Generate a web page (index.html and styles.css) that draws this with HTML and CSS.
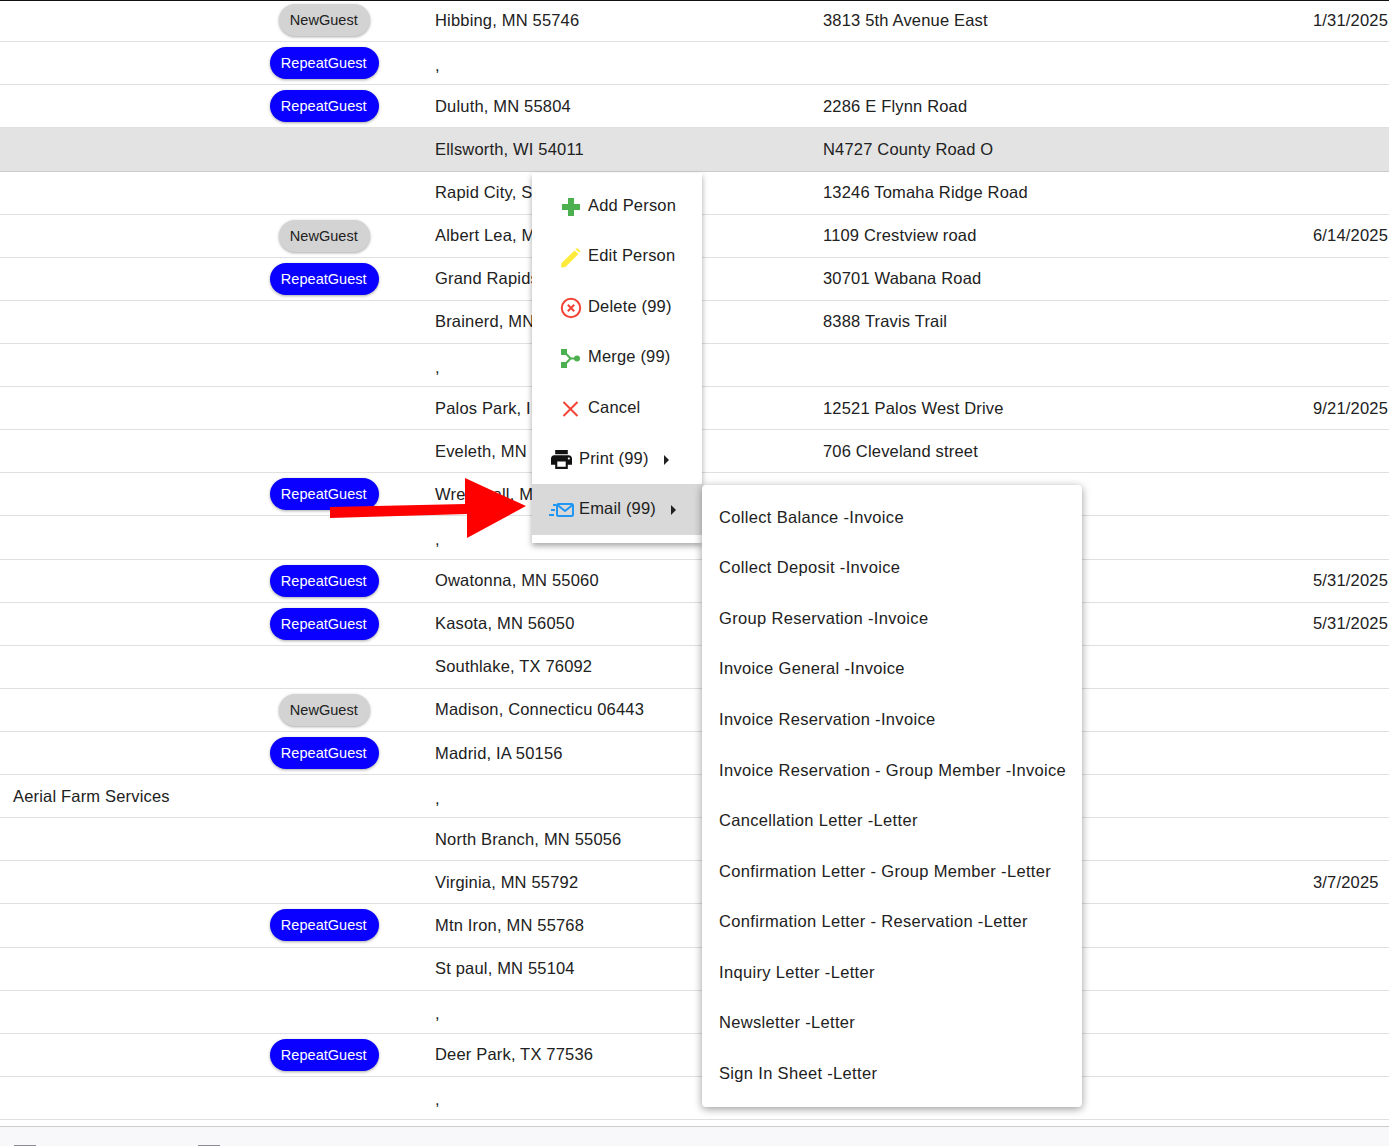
FILE: index.html
```html
<!DOCTYPE html>
<html lang="en">
<head>
<meta charset="utf-8">
<title>Guests</title>
<link rel="stylesheet" href="styles.css">
</head>
<body>
<div class="page">
  <div class="rows">
    <div class="row"><div class="c-co"></div><div class="c-tag"><span class="pill new">NewGuest</span></div><div class="c-city">Hibbing, MN 55746</div><div class="c-addr">3813 5th Avenue East</div><div class="c-date">1/31/2025</div></div>
    <div class="row"><div class="c-co"></div><div class="c-tag"><span class="pill rep">RepeatGuest</span></div><div class="c-city low">,</div><div class="c-addr"></div><div class="c-date"></div></div>
    <div class="row"><div class="c-co"></div><div class="c-tag"><span class="pill rep">RepeatGuest</span></div><div class="c-city">Duluth, MN 55804</div><div class="c-addr">2286 E Flynn Road</div><div class="c-date"></div></div>
    <div class="row sel"><div class="c-co"></div><div class="c-tag"></div><div class="c-city">Ellsworth, WI 54011</div><div class="c-addr">N4727 County Road O</div><div class="c-date"></div></div>
    <div class="row"><div class="c-co"></div><div class="c-tag"></div><div class="c-city">Rapid City, SD 57702</div><div class="c-addr">13246 Tomaha Ridge Road</div><div class="c-date"></div></div>
    <div class="row"><div class="c-co"></div><div class="c-tag"><span class="pill new">NewGuest</span></div><div class="c-city">Albert Lea, MN 56007</div><div class="c-addr">1109 Crestview road</div><div class="c-date">6/14/2025</div></div>
    <div class="row"><div class="c-co"></div><div class="c-tag"><span class="pill rep">RepeatGuest</span></div><div class="c-city">Grand Rapids, MN 55744</div><div class="c-addr">30701 Wabana Road</div><div class="c-date"></div></div>
    <div class="row"><div class="c-co"></div><div class="c-tag"></div><div class="c-city">Brainerd, MN 56401</div><div class="c-addr">8388 Travis Trail</div><div class="c-date"></div></div>
    <div class="row"><div class="c-co"></div><div class="c-tag"></div><div class="c-city low">,</div><div class="c-addr"></div><div class="c-date"></div></div>
    <div class="row"><div class="c-co"></div><div class="c-tag"></div><div class="c-city">Palos Park, IL 60464</div><div class="c-addr">12521 Palos West Drive</div><div class="c-date">9/21/2025</div></div>
    <div class="row"><div class="c-co"></div><div class="c-tag"></div><div class="c-city">Eveleth, MN 55734</div><div class="c-addr">706 Cleveland street</div><div class="c-date"></div></div>
    <div class="row"><div class="c-co"></div><div class="c-tag"><span class="pill rep">RepeatGuest</span></div><div class="c-city">Wrenshall, MN 55797</div><div class="c-addr"></div><div class="c-date"></div></div>
    <div class="row"><div class="c-co"></div><div class="c-tag"></div><div class="c-city low">,</div><div class="c-addr"></div><div class="c-date"></div></div>
    <div class="row"><div class="c-co"></div><div class="c-tag"><span class="pill rep">RepeatGuest</span></div><div class="c-city">Owatonna, MN 55060</div><div class="c-addr"></div><div class="c-date">5/31/2025</div></div>
    <div class="row"><div class="c-co"></div><div class="c-tag"><span class="pill rep">RepeatGuest</span></div><div class="c-city">Kasota, MN 56050</div><div class="c-addr"></div><div class="c-date">5/31/2025</div></div>
    <div class="row"><div class="c-co"></div><div class="c-tag"></div><div class="c-city">Southlake, TX 76092</div><div class="c-addr"></div><div class="c-date"></div></div>
    <div class="row"><div class="c-co"></div><div class="c-tag"><span class="pill new">NewGuest</span></div><div class="c-city">Madison, Connecticu 06443</div><div class="c-addr"></div><div class="c-date"></div></div>
    <div class="row"><div class="c-co"></div><div class="c-tag"><span class="pill rep">RepeatGuest</span></div><div class="c-city">Madrid, IA 50156</div><div class="c-addr"></div><div class="c-date"></div></div>
    <div class="row"><div class="c-co">Aerial Farm Services</div><div class="c-tag"></div><div class="c-city low">,</div><div class="c-addr"></div><div class="c-date"></div></div>
    <div class="row"><div class="c-co"></div><div class="c-tag"></div><div class="c-city">North Branch, MN 55056</div><div class="c-addr"></div><div class="c-date"></div></div>
    <div class="row"><div class="c-co"></div><div class="c-tag"></div><div class="c-city">Virginia, MN 55792</div><div class="c-addr"></div><div class="c-date">3/7/2025</div></div>
    <div class="row"><div class="c-co"></div><div class="c-tag"><span class="pill rep">RepeatGuest</span></div><div class="c-city">Mtn Iron, MN 55768</div><div class="c-addr"></div><div class="c-date"></div></div>
    <div class="row"><div class="c-co"></div><div class="c-tag"></div><div class="c-city">St paul, MN 55104</div><div class="c-addr"></div><div class="c-date"></div></div>
    <div class="row"><div class="c-co"></div><div class="c-tag"></div><div class="c-city low">,</div><div class="c-addr"></div><div class="c-date"></div></div>
    <div class="row"><div class="c-co"></div><div class="c-tag"><span class="pill rep">RepeatGuest</span></div><div class="c-city">Deer Park, TX 77536</div><div class="c-addr"></div><div class="c-date"></div></div>
    <div class="row"><div class="c-co"></div><div class="c-tag"></div><div class="c-city low">,</div><div class="c-addr"></div><div class="c-date"></div></div>
  </div>
  <div class="footer"><span class="stub"></span><span class="stub"></span></div>

  <div class="menu">
    <div class="mi"><span class="ico"><svg width="20" height="20" viewBox="0 0 20 20"><path d="M8 1h6v6h6v6h-6v6H8v-6H2V7h6z" fill="#4caf50"/></svg></span>Add Person</div>
    <div class="mi"><span class="ico"><svg width="21" height="21" viewBox="0 0 21 21"><path d="M1 20.500l.5-4.500L14.500 3.500l4 3.500L5.500 20z M15.500 2.500L17 1l3.500 3-1 1.500z" fill="#ffeb3b"/></svg></span>Edit Person</div>
    <div class="mi"><span class="ico"><svg width="22" height="22" viewBox="0 0 22 22"><circle cx="11" cy="11" r="9.200" fill="none" stroke="#f44336" stroke-width="2"/><path d="M7.800 7.800l6.400 6.400M14.200 7.800l-6.400 6.400" stroke="#f44336" stroke-width="2"/></svg></span>Delete (99)</div>
    <div class="mi"><span class="ico"><svg width="21" height="21" viewBox="0 0 21 21"><path d="M4.500 4l6 6.500h6M4.500 17l6-6.500" fill="none" stroke="#4caf50" stroke-width="2"/><rect x="1" y="1" width="6" height="6" fill="#4caf50"/><rect x="1" y="14" width="6" height="6" fill="#4caf50"/><circle cx="17" cy="10.500" r="3" fill="#4caf50"/></svg></span>Merge (99)</div>
    <div class="mi"><span class="ico"><svg width="20" height="20" viewBox="0 0 20 20"><path d="M3.500 3l14 14M17.500 3l-14 14" stroke="#f44336" stroke-width="2"/></svg></span>Cancel</div>
    <div class="mi sub"><span class="ico wide"><svg width="21" height="19" viewBox="2 3 20 18"><path d="M19 8H5c-1.660 0-3 1.340-3 3v6h4v4h12v-4h4v-6c0-1.660-1.340-3-3-3zm-3 11H8v-5h8v5zm3-7c-.55 0-1-.45-1-1s.45-1 1-1 1 .45 1 1-.45 1-1 1zm-1-9H6v4h12V3z" fill="#111"/></svg></span>Print (99)<span class="caret"></span></div>
    <div class="mi sub hot"><span class="ico wide mail"><svg width="26" height="18" viewBox="0 0 26 18"><rect x="8" y="3" width="16" height="12" rx="1.500" fill="none" stroke="#2196f3" stroke-width="2"/><path d="M8.500 4l7.500 6 7.500-6" fill="none" stroke="#2196f3" stroke-width="2"/><path d="M4 4h3M2 9h4M0 14h5" stroke="#2196f3" stroke-width="2"/></svg></span>Email (99)<span class="caret"></span></div>
  </div>

  <div class="submenu">
    <div class="si">Collect Balance -Invoice</div>
    <div class="si">Collect Deposit -Invoice</div>
    <div class="si">Group Reservation -Invoice</div>
    <div class="si">Invoice General -Invoice</div>
    <div class="si">Invoice Reservation -Invoice</div>
    <div class="si">Invoice Reservation - Group Member -Invoice</div>
    <div class="si">Cancellation Letter -Letter</div>
    <div class="si">Confirmation Letter - Group Member -Letter</div>
    <div class="si">Confirmation Letter - Reservation -Letter</div>
    <div class="si">Inquiry Letter -Letter</div>
    <div class="si">Newsletter -Letter</div>
    <div class="si">Sign In Sheet -Letter</div>
  </div>

  <svg class="arrow" width="200" height="62" viewBox="0 0 200 62"><path d="M0 30L135 27 135 1 196 29 137 61 137 37 0 41z" fill="#ff0000"/></svg>
</div>
</body>
</html>
```
FILE: styles.css
```css
* { box-sizing: border-box; }
html, body { margin: 0; padding: 0; }
body { font-family: "Liberation Sans", Arial, sans-serif; font-size: 16.500px; letter-spacing: .18px; color: #212121; background: #fff; }
.page { position: relative; width: 1389px; height: 1146px; overflow: hidden; border-top: 1px solid #111; }
.rows { display: flex; flex-direction: column; margin-top: -1.900px; }
.row { display: grid; grid-template-columns: 260px 128px 388px 490px 123px; align-items: center; height: 43.115px; border-bottom: 1px solid #e0e0e0; white-space: nowrap; }
.row.sel { background: #e3e3e3; border-bottom-color: #ccc; }
.c-co { padding-left: 13px; }
.c-tag { display: flex; justify-content: center; padding-left: 1px; }
.c-city { padding-left: 47px; }
.c-addr { padding-left: 47px; }
.c-date { padding-left: 47px; }
.low { padding-top: 4px; }
.pill { display: inline-flex; align-items: center; height: 32px; border-radius: 16px; padding: 0 12.500px 0 11px; font-size: 14.500px; letter-spacing: .03px; box-shadow: 0 1px 3px rgba(0,0,0,.35); }
.new { background: #d3d3d3; color: #212121; }
.rep { background: #0a00ff; color: #fff; }
.footer { height: 22px; margin-top: 6px; background: #f8f8fb; border-top: 1px solid #ccc; display: flex; align-items: flex-start; gap: 162px; padding: 18px 0 0 14px; }
.stub { width: 22px; height: 4px; background: #8a8a92; }
.menu { position: absolute; left: 532px; top: 172px; width: 170px; background: #fff; padding: 7.900px 0 7.500px; box-shadow: 0 3px 6px rgba(0,0,0,.35); }
.mi { display: flex; align-items: center; height: 50.600px; padding: 0 0 2px 28px; }
.ico { width: 28px; flex: none; display: flex; justify-content: flex-start; margin-top: 3px; }
.mi.sub { padding-left: 18px; }
.ico.wide { width: 29px; padding-left: 1px; }
.ico.mail { padding-left: 0; margin-left: -1px; width: 30px; }
.hot { background: #d9d9d9; }
.caret { width: 0; height: 0; border-left: 5px solid #212121; border-top: 5px solid transparent; border-bottom: 5px solid transparent; margin: 3px 0 0 15px; }
.submenu { position: absolute; left: 702px; top: 484px; width: 380px; background: #fff; padding: 7px 0 8.400px; border-radius: 4px; box-shadow: 0 2px 8px rgba(0,0,0,.4); }
.si { display: flex; align-items: center; height: 50.550px; padding-left: 17px; white-space: nowrap; letter-spacing: .33px; }
.arrow { position: absolute; left: 330px; top: 476px; }
```
